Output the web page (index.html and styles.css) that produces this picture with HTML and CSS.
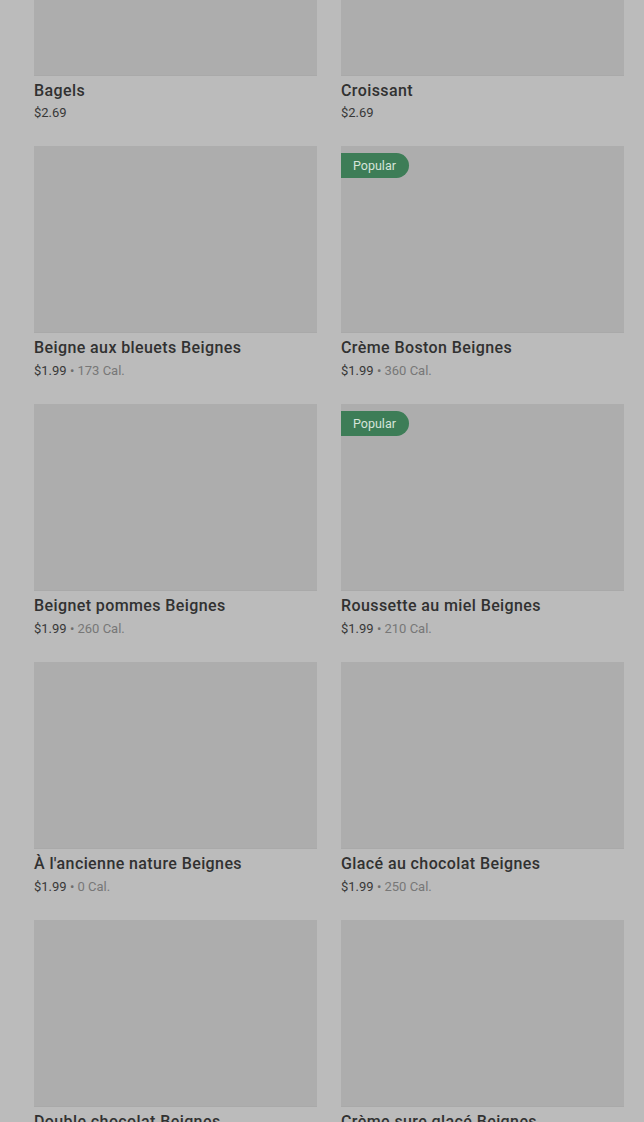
FILE: index.html
```html
<!DOCTYPE html>
<html lang="fr">
<head>
<meta charset="utf-8">
<link rel="stylesheet" href="styles.css">
</head>
<body>
<div class="page">
  <div class="grid">
    <div class="card"><div class="img"></div><div class="title">Bagels</div><div class="meta short"><span class="price">$2.69</span></div></div>
    <div class="card"><div class="img"></div><div class="title">Croissant</div><div class="meta short"><span class="price">$2.69</span></div></div>
    <div class="card"><div class="img"></div><div class="title">Beigne aux bleuets Beignes</div><div class="meta"><span class="price">$1.99</span><span class="dot"> • </span><span class="cal">173 Cal.</span></div></div>
    <div class="card"><div class="img"><span class="badge">Popular</span></div><div class="title">Crème Boston Beignes</div><div class="meta"><span class="price">$1.99</span><span class="dot"> • </span><span class="cal">360 Cal.</span></div></div>
    <div class="card"><div class="img"></div><div class="title">Beignet pommes Beignes</div><div class="meta"><span class="price">$1.99</span><span class="dot"> • </span><span class="cal">260 Cal.</span></div></div>
    <div class="card"><div class="img"><span class="badge">Popular</span></div><div class="title">Roussette au miel Beignes</div><div class="meta"><span class="price">$1.99</span><span class="dot"> • </span><span class="cal">210 Cal.</span></div></div>
    <div class="card"><div class="img"></div><div class="title">À l'ancienne nature Beignes</div><div class="meta"><span class="price">$1.99</span><span class="dot"> • </span><span class="cal">0 Cal.</span></div></div>
    <div class="card"><div class="img"></div><div class="title">Glacé au chocolat Beignes</div><div class="meta"><span class="price">$1.99</span><span class="dot"> • </span><span class="cal">250 Cal.</span></div></div>
    <div class="card"><div class="img"></div><div class="title">Double chocolat Beignes</div><div class="meta"><span class="price">$1.99</span><span class="dot"> • </span><span class="cal">270 Cal.</span></div></div>
    <div class="card"><div class="img"></div><div class="title">Crème sure glacé Beignes</div><div class="meta"><span class="price">$1.99</span><span class="dot"> • </span><span class="cal">280 Cal.</span></div></div>
  </div>
</div>
</body>
</html>
```

FILE: styles.css
```css
html, body {
  margin: 0;
  padding: 0;
  background: #bbbbbb;
  overflow: hidden;
  height: 1122px;
}
.page {
  padding: 0 20px 0 34px;
  font-family: Roboto, "Liberation Sans", sans-serif;
}
.grid {
  margin-top: -111px;
  display: grid;
  grid-template-columns: 283px 283px;
  column-gap: 24px;
  row-gap: 24px;
}
.card {
  display: flex;
  flex-direction: column;
}
.img {
  position: relative;
  height: 187px;
  background: #adadad;
  border-bottom: 1px solid #a9a9a9;
  box-sizing: border-box;
}
.badge {
  position: absolute;
  top: 7px;
  left: 0;
  height: 25px;
  line-height: 25px;
  padding: 0 13px 0 12px;
  background: #3d7d57;
  color: #d6e4da;
  font-size: 12.5px;
  border-radius: 0 13px 13px 0;
}
.title {
  margin-top: 4px;
  line-height: 21px;
  font-size: 16px;
  font-weight: 500;
  letter-spacing: 0.4px;
  color: #313131;
}
.meta {
  margin-top: 3px;
  line-height: 19px;
  font-size: 13px;
}
.meta.short {
  line-height: 18px;
}
.price {
  color: #383838;
}
.dot {
  color: #6e6e6e;
}
.cal {
  color: #777777;
}
```
